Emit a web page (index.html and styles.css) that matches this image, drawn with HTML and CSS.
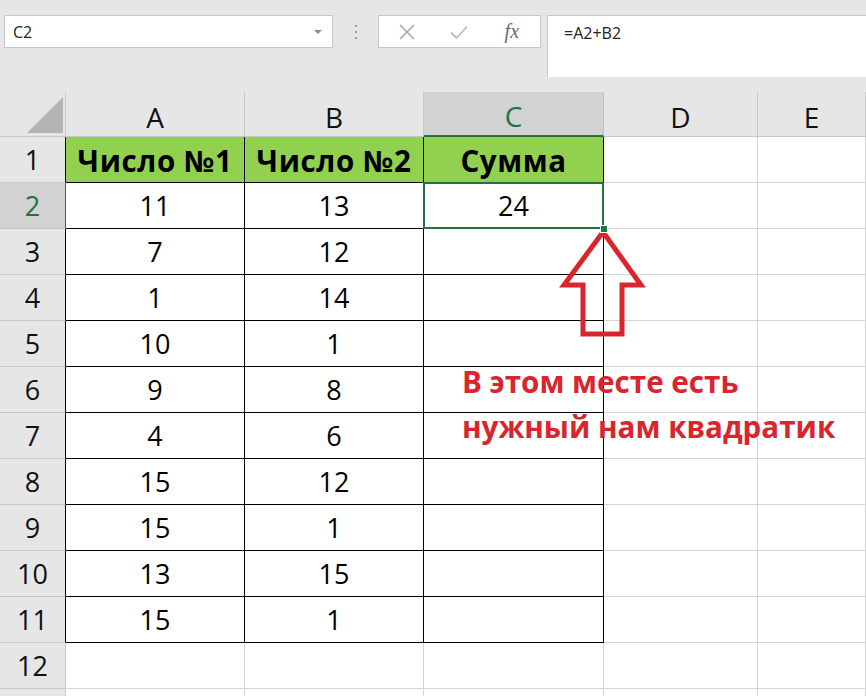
FILE: index.html
```html
<!DOCTYPE html>
<html lang="ru">
<head>
<meta charset="utf-8">
<title>Excel</title>
<link rel="stylesheet" href="styles.css">
</head>
<body>
<div class="topbar">
  <div class="namebox"><span>C2</span><span class="dd"></span></div>
  <div class="dots"><i></i><i></i><i></i></div>
  <div class="fbtns">
    <span class="fb">
      <svg width="18" height="18" viewBox="0 0 18 18"><path d="M2 2 L16 16 M16 2 L2 16" stroke="#a8a8a8" stroke-width="1.6" fill="none"/></svg>
    </span>
    <span class="fb">
      <svg width="20" height="16" viewBox="0 0 20 16"><path d="M2 8.5 L7.5 14 L18 2.5" stroke="#bdbdbd" stroke-width="1.8" fill="none"/></svg>
    </span>
    <span class="fb fx">fx</span>
  </div>
  <div class="finput">=A2+B2</div>
</div>

<div class="sheet">
  <div class="corner"></div>
  <div class="ch">A</div>
  <div class="ch">B</div>
  <div class="ch csel">C</div>
  <div class="ch">D</div>
  <div class="ch">E</div>

  <div class="rh rb">1</div>
  <div class="c b g hd">Число №1</div>
  <div class="c b g hd">Число №2</div>
  <div class="c b g hd">Сумма</div>
  <div class="c"></div>
  <div class="c"></div>

  <div class="rh rsel">2</div>
  <div class="c b">11</div>
  <div class="c b">13</div>
  <div class="c b sel">24<span class="handle"></span></div>
  <div class="c"></div>
  <div class="c"></div>

  <div class="rh rb">3</div>
  <div class="c b">7</div>
  <div class="c b">12</div>
  <div class="c b"></div>
  <div class="c"></div>
  <div class="c"></div>

  <div class="rh rb">4</div>
  <div class="c b">1</div>
  <div class="c b">14</div>
  <div class="c b"></div>
  <div class="c"></div>
  <div class="c"></div>

  <div class="rh rb">5</div>
  <div class="c b">10</div>
  <div class="c b">1</div>
  <div class="c b"></div>
  <div class="c"></div>
  <div class="c"></div>

  <div class="rh rb">6</div>
  <div class="c b">9</div>
  <div class="c b">8</div>
  <div class="c b"></div>
  <div class="c"></div>
  <div class="c"></div>

  <div class="rh rb">7</div>
  <div class="c b">4</div>
  <div class="c b">6</div>
  <div class="c b"></div>
  <div class="c"></div>
  <div class="c"></div>

  <div class="rh rb">8</div>
  <div class="c b">15</div>
  <div class="c b">12</div>
  <div class="c b"></div>
  <div class="c"></div>
  <div class="c"></div>

  <div class="rh rb">9</div>
  <div class="c b">15</div>
  <div class="c b">1</div>
  <div class="c b"></div>
  <div class="c"></div>
  <div class="c"></div>

  <div class="rh rb">10</div>
  <div class="c b">13</div>
  <div class="c b">15</div>
  <div class="c b"></div>
  <div class="c"></div>
  <div class="c"></div>

  <div class="rh rb">11</div>
  <div class="c b">15</div>
  <div class="c b">1</div>
  <div class="c b"></div>
  <div class="c"></div>
  <div class="c"></div>

  <div class="rh">12</div>
  <div class="c"></div>
  <div class="c"></div>
  <div class="c"></div>
  <div class="c"></div>
  <div class="c"></div>

  <div class="rh"></div>
  <div class="c"></div>
  <div class="c"></div>
  <div class="c"></div>
  <div class="c"></div>
  <div class="c"></div>

  <svg class="arrow" width="120" height="140" viewBox="0 0 120 140">
    <path d="M48 10 L86 63 L67 63 L67 112 L28 112 L28 63 L9 63 Z" fill="none" stroke="#d9252e" stroke-width="5" stroke-linejoin="miter"/>
  </svg>
  <div class="note">В этом месте есть<br>нужный нам квадратик</div>
</div>
</body>
</html>
```

FILE: styles.css
```css
* { box-sizing: border-box; }
html, body { margin: 0; padding: 0; }
body {
  width: 866px;
  height: 696px;
  overflow: hidden;
  background: #e6e6e6;
  font-family: "Open Sans", Lato, sans-serif;
  color: #000;
}
.topbar {
  height: 92px;
  padding-top: 15px;
  display: flex;
  align-items: flex-start;
}
.namebox {
  margin-left: 4px;
  width: 329px;
  height: 33px;
  background: #fff;
  border: 1px solid #c8c8c8;
  display: flex;
  align-items: center;
  justify-content: space-between;
  padding: 0 10px 0 8px;
  font-size: 16px;
  color: #222;
}
.dd {
  width: 0; height: 0;
  border-left: 4px solid transparent;
  border-right: 4px solid transparent;
  border-top: 4px solid #8a8a8a;
}
.dots {
  width: 45px;
  height: 33px;
  display: flex;
  flex-direction: column;
  align-items: center;
  justify-content: center;
  gap: 4px;
}
.dots i {
  display: block;
  width: 2px; height: 2px;
  background: #a0a0a0;
}
.fbtns {
  width: 163px;
  height: 33px;
  background: #fff;
  border: 1px solid #c8c8c8;
  display: flex;
  align-items: center;
  justify-content: space-around;
  padding: 0 2px 0 2px;
}
.fb { display: flex; align-items: center; justify-content: center; width: 40px; }
.fx {
  font-family: "Liberation Serif", serif;
  font-style: italic;
  font-size: 20px;
  color: #6a6a6a;
}
.finput {
  margin-left: 6px;
  flex: 1;
  height: 62px;
  background: #fff;
  border-left: 1px solid #c8c8c8;
  border-top: 1px solid #c8c8c8;
  padding: 6px 0 0 16px;
  font-size: 16px;
  color: #222;
}
.sheet {
  position: relative;
  display: grid;
  grid-template-columns: 66px 179px 179px 180px 154px 108px;
  grid-template-rows: 45px repeat(13, 46px);
  background: #fff;
}
.corner {
  position: relative;
  background: #e6e6e6;
  border-right: 1px solid #c8c8c8;
  border-bottom: 1px solid #c8c8c8;
}
.corner::after {
  content: "";
  position: absolute;
  left: 27px; top: 5px;
  width: 36px; height: 36px;
  background: #b4b4b4;
  clip-path: polygon(100% 0, 100% 100%, 0 100%);
}
.ch {
  background: #e6e6e6;
  border-right: 1px solid #c8c8c8;
  border-bottom: 1px solid #c8c8c8;
  display: flex;
  align-items: center;
  justify-content: center;
  padding-top: 5px;
  font-size: 28px;
  color: #111;
}
.ch.csel {
  background: #d2d2d2;
  color: #217346;
  border-bottom: 2px solid #217346;
  border-right-color: #c0c0c0;
}
.rh {
  background: #e6e6e6;
  border-right: 1px solid #c8c8c8;
  border-bottom: 1px solid #c8c8c8;
  display: flex;
  align-items: center;
  justify-content: center;
  font-size: 27px;
  color: #111;
}
.rh.rb { border-right-color: #000; }
.rh.rsel {
  background: #d2d2d2;
  color: #217346;
  border-right: 1px solid #217346;
}
.c {
  border-right: 1px solid #d4d4d4;
  border-bottom: 1px solid #d4d4d4;
  display: flex;
  align-items: center;
  justify-content: center;
  font-size: 27px;
}
.c.b {
  border-right-color: #000;
  border-bottom-color: #000;
}
.c.g { background: #92d050; }
.c.hd { font-weight: 700; font-size: 29.5px; letter-spacing: 0.6px; padding-top: 1px; }
.c.sel { position: relative; }
.c.sel::after {
  content: "";
  position: absolute;
  left: -1px; top: -1px; right: -1px; bottom: -1px;
  border: 2px solid #217346;
}
.handle {
  position: absolute;
  right: -5px; bottom: -5px;
  width: 8px; height: 8px;
  background: #217346;
  border: 1px solid #fff;
  z-index: 2;
}
.arrow {
  position: absolute;
  left: 555px;
  top: 130px;
}
.note {
  position: absolute;
  left: 462px;
  top: 267px;
  font-size: 29.6px;
  line-height: 45px;
  font-weight: 700;
  color: #d9252e;
  white-space: nowrap;
}
```
